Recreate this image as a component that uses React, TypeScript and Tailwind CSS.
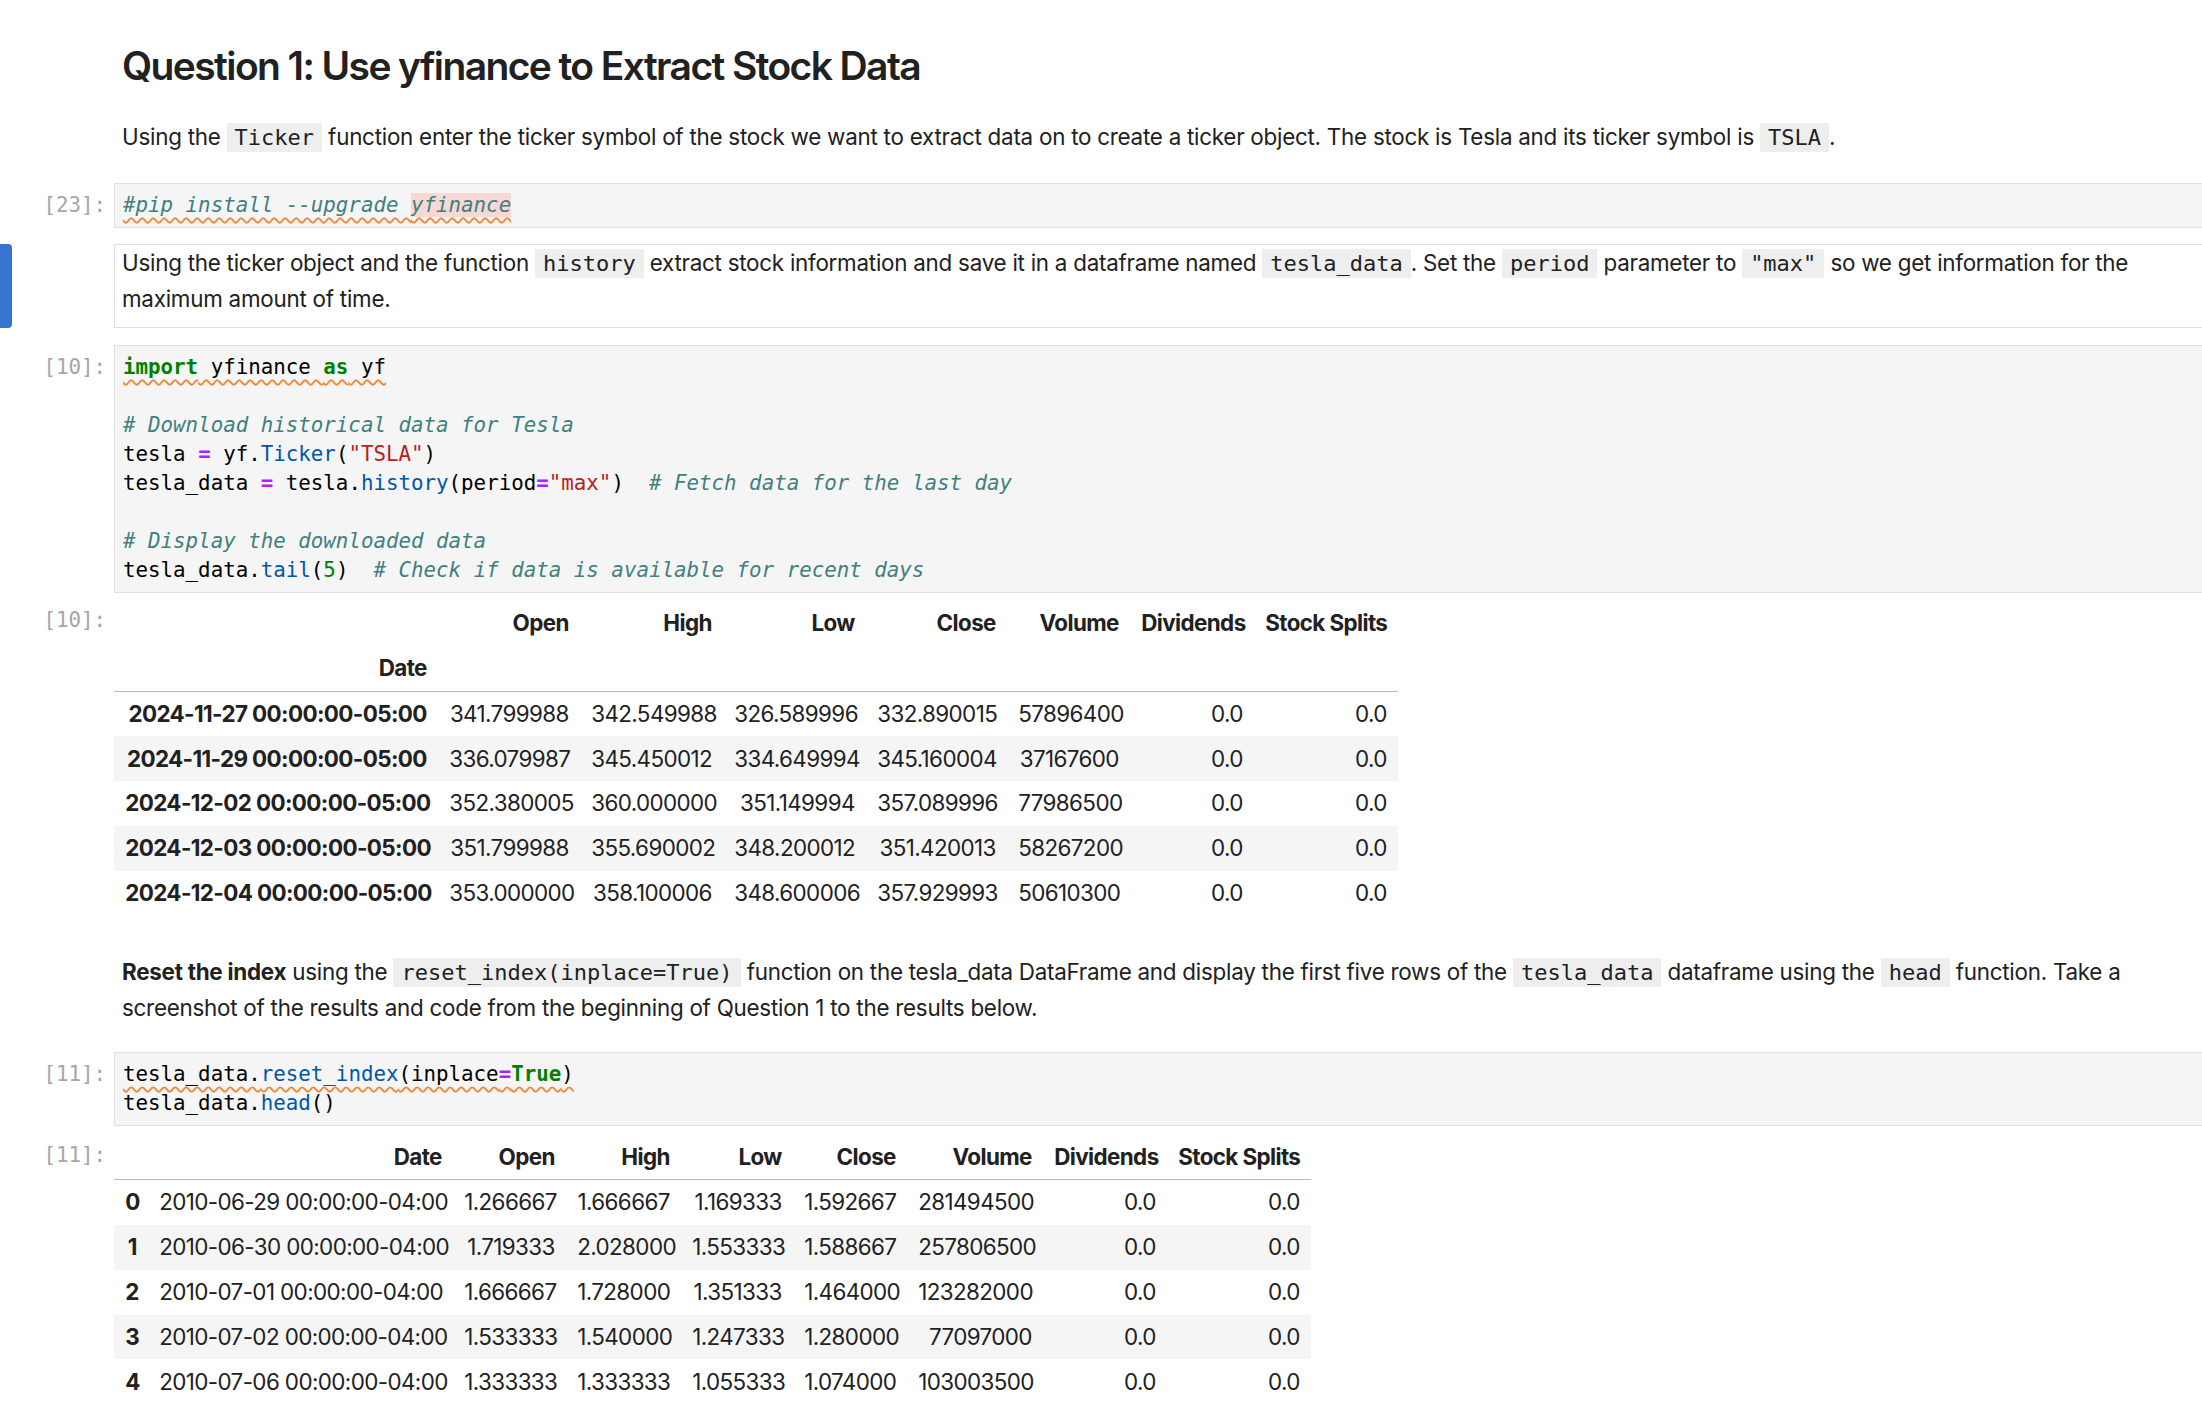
import React from 'react';

const SANS = "font-['Inter','Noto_Sans',sans-serif]";
const MONO = "font-['DejaVu_Sans_Mono','Liberation_Mono',monospace]";

// syntax colours, same as the classic jupyter theme
const K = ({ children }: { children: React.ReactNode }) => <span className="font-bold text-[#008000]">{children}</span>;
const O = ({ children }: { children: React.ReactNode }) => <span className="font-bold text-[#aa22ff]">{children}</span>;
const F = ({ children }: { children: React.ReactNode }) => <span className="text-[#0055aa]">{children}</span>;
const S = ({ children }: { children: React.ReactNode }) => <span className="text-[#ba2121]">{children}</span>;
const N = ({ children }: { children: React.ReactNode }) => <span className="text-[#008000]">{children}</span>;
const C = ({ children }: { children: React.ReactNode }) => <span className="italic text-[#408080]">{children}</span>;
const Squiggle = ({ children }: { children: React.ReactNode }) => (
  <span className="underline decoration-wavy decoration-[#f0883a] decoration-[1.5px] underline-offset-[5px]">
    {children}
  </span>
);

function InlineCode({ children }: { children: React.ReactNode }) {
  return (
    <code className={'bg-[#eeeeee] px-[8px] py-[2px] text-[22px] leading-none tracking-normal text-[#212121] ' + MONO}>
      {children}
    </code>
  );
}

function Prompt({ n, className = '' }: { n?: string; className?: string }) {
  return (
    <div
      className={
        'w-[114px] shrink-0 pr-[8px] text-right text-[20.8px] leading-[29px] tracking-normal text-[#a6a6a6] ' +
        MONO +
        ' ' +
        className
      }
    >
      {n}
    </div>
  );
}

function CodeCell({ n, className = '', children }: { n: string; className?: string; children: React.ReactNode }) {
  return (
    <div className={'flex ' + className}>
      <Prompt n={n} className="pt-[8px]" />
      <pre
        className={
          'w-[2120px] shrink-0 whitespace-pre border border-[#e0e0e0] bg-[#f5f5f5] px-[8px] py-[7px] text-[20.8px] leading-[29px] text-black ' +
          MONO
        }
      >
        {children}
      </pre>
    </div>
  );
}

function Markdown({
  className = '',
  active = false,
  children,
}: {
  className?: string;
  active?: boolean;
  children: React.ReactNode;
}) {
  return (
    <div className={'flex ' + className}>
      <div className="flex w-[114px] shrink-0">
        {active && <div className="w-[12px] rounded-r-[4px] bg-[#3574d0]" />}
      </div>
      <div
        className={
          'w-[2120px] shrink-0 border pl-[7px] pr-[8px] text-[22.4px] leading-[36px] tracking-[-0.25px] text-[#212121] ' +
          (active ? 'border-[#e0e0e0] pb-[10px]' : 'border-transparent')
        }
      >
        {children}
      </div>
    </div>
  );
}

const cell = 'whitespace-nowrap px-[11.2px] py-[11.2px] text-right align-middle';

const tailCols = ['w-[324px]', 'w-[142px]', 'w-[143px]', 'w-[143px]', 'w-[141px]', 'w-[123px]', 'w-[124px]', 'w-[144px]'];
const tailRows = [
  ['2024-11-27 00:00:00-05:00', '341.799988', '342.549988', '326.589996', '332.890015', '57896400', '0.0', '0.0'],
  ['2024-11-29 00:00:00-05:00', '336.079987', '345.450012', '334.649994', '345.160004', '37167600', '0.0', '0.0'],
  ['2024-12-02 00:00:00-05:00', '352.380005', '360.000000', '351.149994', '357.089996', '77986500', '0.0', '0.0'],
  ['2024-12-03 00:00:00-05:00', '351.799988', '355.690002', '348.200012', '351.420013', '58267200', '0.0', '0.0'],
  ['2024-12-04 00:00:00-05:00', '353.000000', '358.100006', '348.600006', '357.929993', '50610300', '0.0', '0.0'],
];

const headCols = ['w-[34px]', 'w-[305px]', 'w-[113px]', 'w-[115px]', 'w-[112px]', 'w-[114px]', 'w-[136px]', 'w-[124px]', 'w-[144px]'];
const headRows = [
  ['0', '2010-06-29 00:00:00-04:00', '1.266667', '1.666667', '1.169333', '1.592667', '281494500', '0.0', '0.0'],
  ['1', '2010-06-30 00:00:00-04:00', '1.719333', '2.028000', '1.553333', '1.588667', '257806500', '0.0', '0.0'],
  ['2', '2010-07-01 00:00:00-04:00', '1.666667', '1.728000', '1.351333', '1.464000', '123282000', '0.0', '0.0'],
  ['3', '2010-07-02 00:00:00-04:00', '1.533333', '1.540000', '1.247333', '1.280000', '77097000', '0.0', '0.0'],
  ['4', '2010-07-06 00:00:00-04:00', '1.333333', '1.333333', '1.055333', '1.074000', '103003500', '0.0', '0.0'],
];

const columns = ['Open', 'High', 'Low', 'Close', 'Volume', 'Dividends', 'Stock Splits'];

function TailTable() {
  return (
    <table className="w-[1284px] table-fixed border-collapse text-[22.4px] leading-none tracking-[-0.6px] text-[#212121]">
      <colgroup>
        {tailCols.map((c, i) => (
          <col key={i} className={c} />
        ))}
      </colgroup>
      <thead>
        <tr>
          <th className={cell} />
          {columns.map((c) => (
            <th key={c} className={cell + ' font-bold'}>
              {c}
            </th>
          ))}
        </tr>
        <tr>
          <th className={cell + ' border-b border-[#bdbdbd] font-bold'}>Date</th>
          {columns.map((c) => (
            <th key={c} className={cell + ' border-b border-[#bdbdbd]'} />
          ))}
        </tr>
      </thead>
      <tbody>
        {tailRows.map((r, i) => (
          <tr key={i} className={i % 2 === 1 ? 'bg-[#f5f5f5]' : 'bg-white'}>
            <th className={cell + ' font-bold'}>{r[0]}</th>
            {r.slice(1).map((v, j) => (
              <td key={j} className={cell}>
                {v}
              </td>
            ))}
          </tr>
        ))}
      </tbody>
    </table>
  );
}

function HeadTable() {
  return (
    <table className="w-[1197px] table-fixed border-collapse text-[22.4px] leading-none tracking-[-0.6px] text-[#212121]">
      <colgroup>
        {headCols.map((c, i) => (
          <col key={i} className={c} />
        ))}
      </colgroup>
      <thead>
        <tr>
          <th className={cell + ' border-b border-[#bdbdbd]'} />
          {['Date', ...columns].map((c) => (
            <th key={c} className={cell + ' border-b border-[#bdbdbd] font-bold'}>
              {c}
            </th>
          ))}
        </tr>
      </thead>
      <tbody>
        {headRows.map((r, i) => (
          <tr key={i} className={i % 2 === 1 ? 'bg-[#f5f5f5]' : 'bg-white'}>
            <th className={cell + ' font-bold'}>{r[0]}</th>
            {r.slice(1).map((v, j) => (
              <td key={j} className={cell}>
                {v}
              </td>
            ))}
          </tr>
        ))}
      </tbody>
    </table>
  );
}

export default function App() {
  return (
    <div className={'h-[1416px] w-full overflow-hidden bg-white pt-[42px] ' + SANS}>
      <div className="flex">
        <div className="w-[114px] shrink-0" />
        <h2 className="pl-[8px] text-[39px] font-semibold leading-[47px] tracking-[-1.6px] text-[#212121]">
          Question 1: Use yfinance to Extract Stock Data
        </h2>
      </div>

      <Markdown className="mt-[29px]">
        Using the <InlineCode>Ticker</InlineCode> function enter the ticker symbol of the stock we want to extract data
        on to create a ticker object. The stock is Tesla and its ticker symbol is <InlineCode>TSLA</InlineCode>.
      </Markdown>

      <CodeCell n="[23]:" className="mt-[27px]">
        <Squiggle>
          <C>
            #pip install --upgrade <span className="bg-[#f8d8d4]">yfinance</span>
          </C>
        </Squiggle>
      </CodeCell>

      <Markdown active className="mt-[16px]">
        Using the ticker object and the function <InlineCode>history</InlineCode> extract stock information and save it
        in a dataframe named <InlineCode>tesla_data</InlineCode>. Set the <InlineCode>period</InlineCode> parameter to{' '}
        <InlineCode>"max"</InlineCode> so we get information for the maximum amount of time.
      </Markdown>

      <CodeCell n="[10]:" className="mt-[17px]">
        <Squiggle>
          <K>import</K> yfinance <K>as</K> yf
        </Squiggle>
        {'\n\n'}
        <C># Download historical data for Tesla</C>
        {'\ntesla '}
        <O>=</O> yf.<F>Ticker</F>(<S>"TSLA"</S>)
        {'\ntesla_data '}
        <O>=</O> tesla.<F>history</F>(period<O>=</O>
        <S>"max"</S>){'  '}
        <C># Fetch data for the last day</C>
        {'\n\n'}
        <C># Display the downloaded data</C>
        {'\ntesla_data.'}
        <F>tail</F>(<N>5</N>){'  '}
        <C># Check if data is available for recent days</C>
      </CodeCell>

      <div className="mt-[8px] flex">
        <Prompt n="[10]:" className="pt-[5px]" />
        <TailTable />
      </div>

      <Markdown className="mt-[38px]">
        <strong className="font-bold">Reset the index</strong> using the{' '}
        <InlineCode>reset_index(inplace=True)</InlineCode> function on the tesla_data DataFrame and display the first
        five rows of the <InlineCode>tesla_data</InlineCode> dataframe using the <InlineCode>head</InlineCode> function.
        Take a screenshot of the results and code from the beginning of Question 1 to the results below.
      </Markdown>

      <CodeCell n="[11]:" className="mt-[25px]">
        <Squiggle>
          tesla_data.<F>reset_index</F>(inplace<O>=</O>
          <K>True</K>)
        </Squiggle>
        {'\ntesla_data.'}
        <F>head</F>()
      </CodeCell>

      <div className="mt-[8px] flex">
        <Prompt n="[11]:" className="pt-[7px]" />
        <HeadTable />
      </div>
    </div>
  );
}
